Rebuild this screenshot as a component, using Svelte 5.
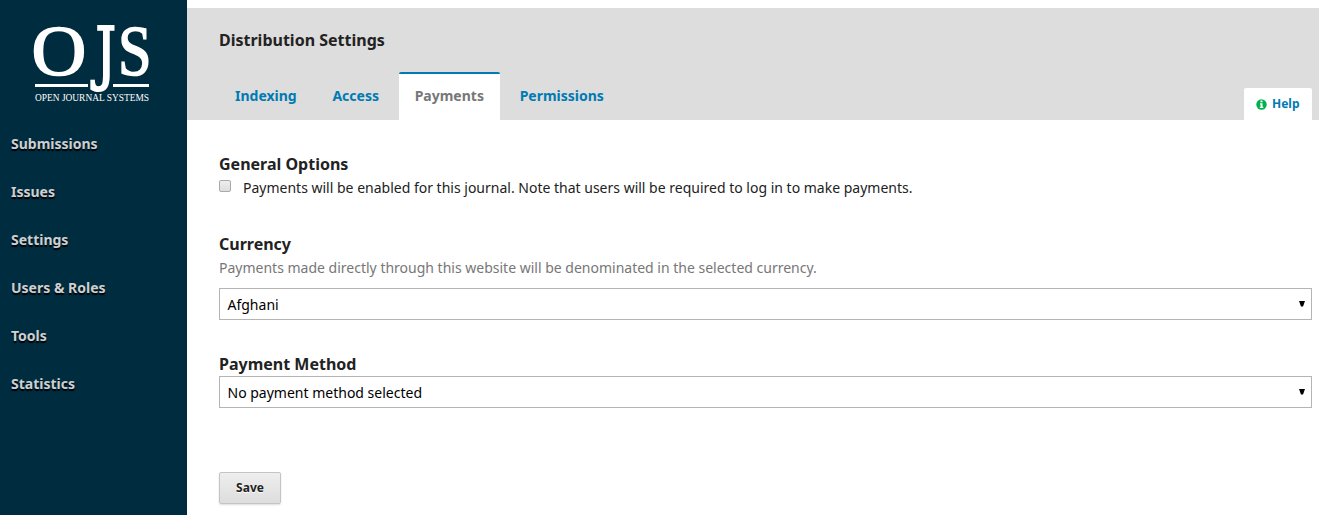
<script>
  const nav = ['Submissions', 'Issues', 'Settings', 'Users & Roles', 'Tools', 'Statistics'];
  const tabs = ['Indexing', 'Access', 'Payments', 'Permissions'];
  let active = $state('Payments');
</script>

<div class="page">
  <aside>
    <svg class="logo" width="187" height="120" viewBox="0 0 187 120" fill="#fff">
      <g font-family="'Liberation Serif', serif" stroke="#fff">
        <text transform="translate(31.5 75) scale(1.07 1)" font-size="71" stroke-width="1.6">O</text>
        <text transform="translate(95.5 77) scale(.74 1)" font-size="69" stroke-width="2.2" font-family="'DejaVu Serif', serif">J</text>
        <text transform="translate(118 75) scale(.85 1)" font-size="71" stroke-width="1.6">S</text>
        <text x="35" y="101" font-size="9.5" stroke="none" textLength="114" lengthAdjust="spacingAndGlyphs">OPEN JOURNAL SYSTEMS</text>
      </g>
      <rect x="35" y="84" width="53" height="3" />
      <rect x="113" y="84" width="36" height="3" />
    </svg>
    <nav>
      {#each nav as name}
        <a href="#top">{name}</a>
      {/each}
    </nav>
  </aside>

  <main>
    <header>
      <h1>Distribution Settings</h1>
      <div class="bar">
        <div class="tabs">
          {#each tabs as tab}
            <button class="tab" class:active={tab === active} onclick={() => (active = tab)}>{tab}</button>
          {/each}
        </div>
        <a class="help" href="#top">
          <svg width="11" height="11" viewBox="0 0 11 11">
            <circle cx="5.5" cy="5.5" r="5.2" fill="#00b24e" />
            <path d="M4.5 1.5h2v1.7h-2zM4 4.3h2.5v3.4h.8v1.2H3.8V7.7h.8V5.4H4z" fill="#fff" />
          </svg>
          Help
        </a>
      </div>
    </header>

    <form>
      <section class="general">
        <h2>General Options</h2>
        <label><input type="checkbox" /><span>Payments will be enabled for this journal. Note that users will be required to log in to make payments.</span></label>
      </section>
      <section class="currency">
        <h2>Currency</h2>
        <p>Payments made directly through this website will be denominated in the selected currency.</p>
        <div class="select"><span>Afghani</span><svg width="6" height="6" viewBox="0 0 6 6"><path d="M0 0h6L4 5.5H2z" /></svg></div>
      </section>
      <section class="method">
        <h2>Payment Method</h2>
        <div class="select"><span>No payment method selected</span><svg width="6" height="6" viewBox="0 0 6 6"><path d="M0 0h6L4 5.5H2z" /></svg></div>
      </section>
      <button type="button" class="save">Save</button>
    </form>
  </main>
</div>

<style>
  :global(body) { margin: 0; background: #fff; }
  .page { display: flex; height: 515px; overflow: hidden; font: 14px/24px "Noto Sans", sans-serif; color: #222; }
  aside { width: 187px; flex: none; background: #002c40; }
  .logo { display: block; }
  nav { display: flex; flex-direction: column; }
  nav a { height: 48px; line-height: 48px; padding-left: 11px; color: #ccd0d2; font-weight: 700; text-decoration: none; text-shadow: 0 2px 1px #000; }
  main { flex: 1; padding-top: 8px; }
  header { height: 112px; background: #ddd; display: flex; flex-direction: column; justify-content: space-between; }
  h1, h2, p { margin: 0; }
  h1 { font-size: 16px; line-height: 24px; font-weight: 700; padding: 20px 32px 0; }
  h2 { font-size: 16px; line-height: 24px; font-weight: 700; }
  .bar { display: flex; align-items: flex-end; justify-content: space-between; padding: 0 7px 0 32px; }
  .tabs { display: flex; gap: 3.7px; }
  .tab { height: 48px; padding: 0 16px 2px; border: 0; border-top: 2px solid transparent; background: none; color: #007ab2; font: 700 14px/44px "Noto Sans", sans-serif; }
  .active { background: #fff; color: #777; border-top-color: #007ab2; border-radius: 2px 2px 0 0; }
  .help { display: flex; align-items: center; gap: 5px; box-sizing: border-box; width: 68px; height: 32px; padding-left: 12px; background: #fff; border-radius: 2px 2px 0 0; color: #007ab2; font-size: 12px; font-weight: 700; text-decoration: none; }
  form { padding: 32px 7px 0 32px; }
  .general { height: 80px; }
  label { display: flex; align-items: flex-start; }
  input { appearance: none; box-sizing: border-box; width: 12px; height: 12px; margin: 4px 12px 0 0; border: 1px solid #aaa; border-radius: 2px; background: linear-gradient(#eee, #ddd); }
  .currency { height: 120px; }
  .currency p { color: #777; margin-bottom: 8px; }
  .select { display: flex; align-items: center; justify-content: space-between; box-sizing: border-box; height: 32px; padding: 0 6px 0 8px; border: 1px solid #b4b4b4; color: #000; }
  .select span { padding-top: 2px; margin-left: -.5px; }
  .method { height: 120px; }
  .save { display: block; box-sizing: border-box; width: 62px; height: 32px; padding: 0; border: 1px solid #c4c4c4; border-radius: 2px; background: linear-gradient(#eee, #ddd); box-shadow: 0 1px 2px #0002; color: #222; font: 700 12px/30px "Noto Sans", sans-serif; text-shadow: 0 1px 1px #fff; }
</style>
